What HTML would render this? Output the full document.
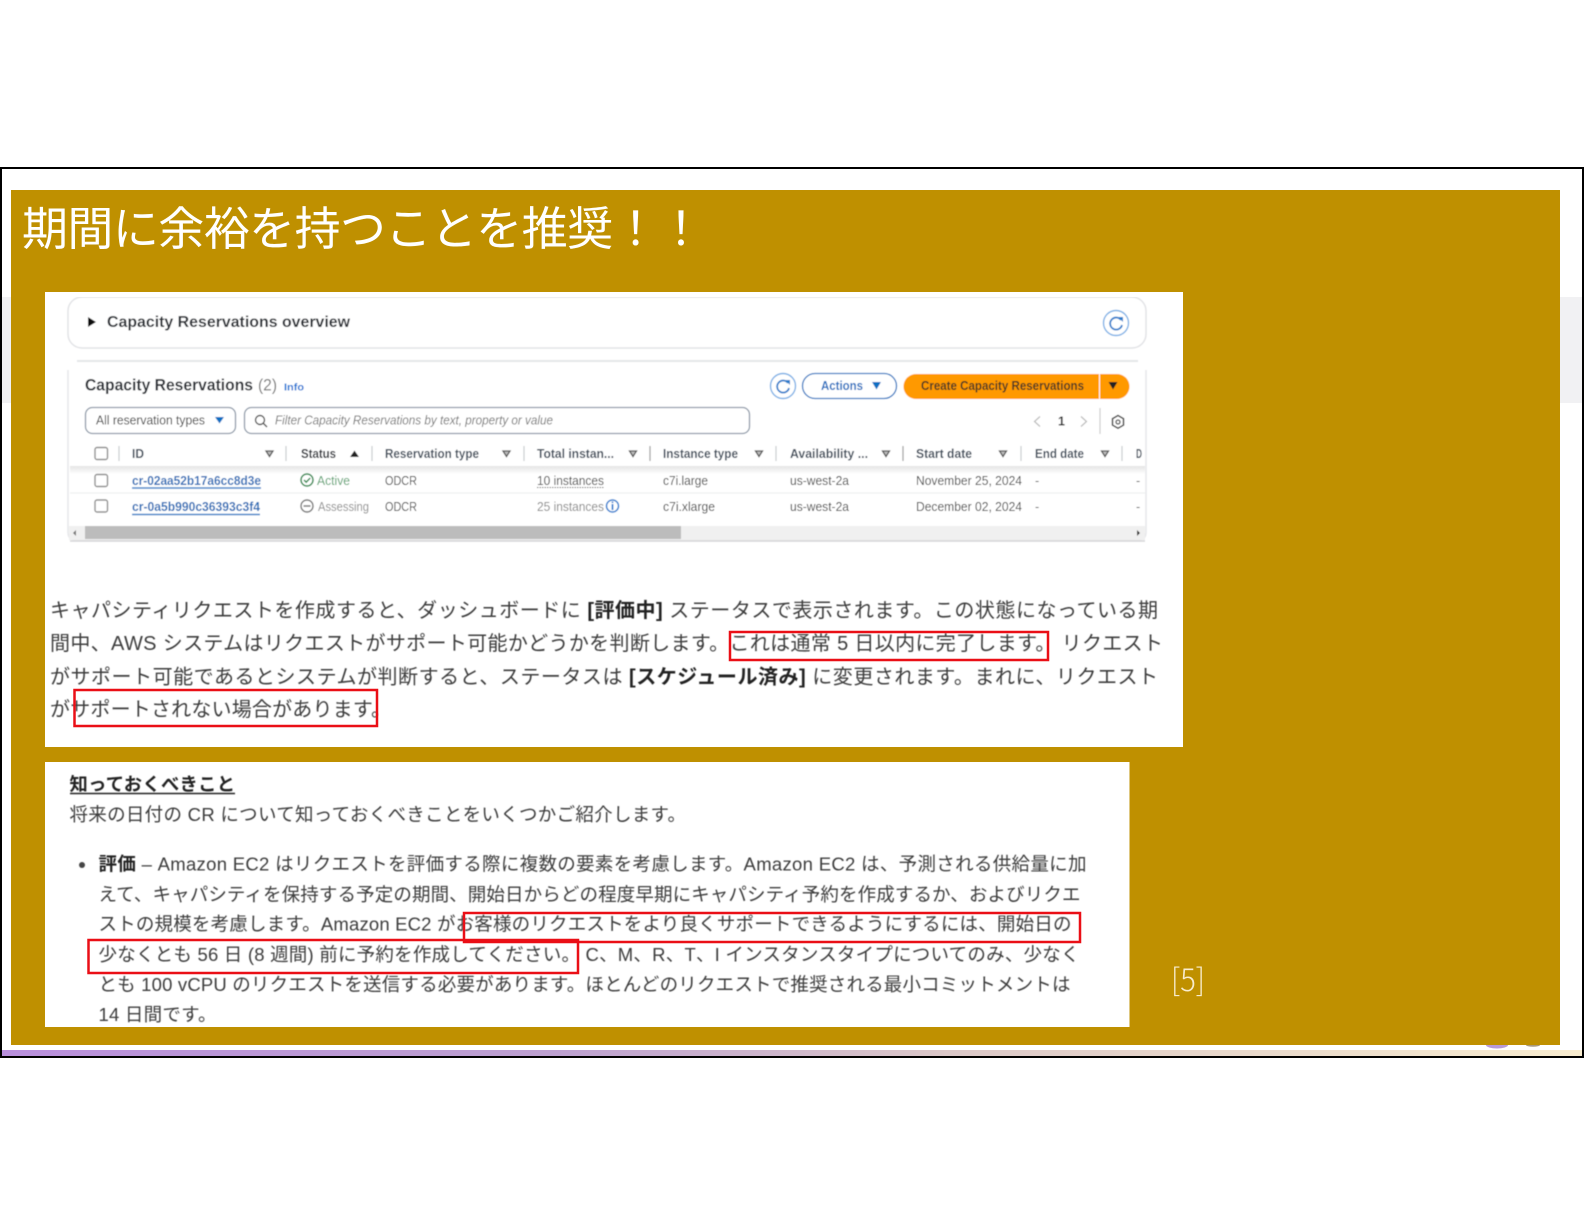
<!DOCTYPE html>
<html lang="ja"><head><meta charset="utf-8"><title>期間に余裕を持つことを推奨！！</title>
<style>
html,body{margin:0;padding:0;background:#fff}
svg{display:block}
.t{font-family:"Liberation Sans","Noto Sans CJK JP",sans-serif;fill:#3a3a3a;font-size:12.5px}
.h{font-weight:700;fill:#414d5c}
.c{fill:#444}
.j{font-family:"Liberation Sans","Noto Sans CJK JP",sans-serif;fill:#3c3c3c;font-size:20px}
.k{font-family:"Liberation Sans","Noto Sans CJK JP",sans-serif;fill:#3c3c3c;font-size:18.5px}
.b{font-weight:700;fill:#222}
.l{fill:#2a70b8;font-weight:700}
</style></head><body>
<svg xmlns="http://www.w3.org/2000/svg" width="1584" height="1224" viewBox="0 0 1584 1224">
<defs>
<filter id="bl" x="0" y="0" width="100%" height="100%"><feGaussianBlur stdDeviation="0.4"/></filter>
<linearGradient id="g" x1="0" x2="1" y1="0" y2="0"><stop offset="0" stop-color="#b98fdc"/><stop offset=".35" stop-color="#bda0d0"/><stop offset=".6" stop-color="#dcc8c8"/><stop offset="1" stop-color="#f8eccf"/></linearGradient>
<linearGradient id="sh" x1="0" x2="0" y1="0" y2="1"><stop offset="0" stop-color="#e4e4e4"/><stop offset="1" stop-color="#fff"/></linearGradient>
</defs>
<rect width="1584" height="1224" fill="#fff"/>
<rect x="2" y="297" width="9" height="106" fill="#f1f1f3"/>
<rect x="1559" y="297" width="23" height="106" fill="#f1f1f3"/>
<rect x="2" y="1050" width="1580" height="6" fill="url(#g)"/>
<ellipse cx="1497" cy="1045" rx="11" ry="3.500" fill="#b79ad8"/>
<ellipse cx="1533" cy="1045" rx="7" ry="1.800" fill="#a89a80"/>
<rect x="11" y="190" width="1549" height="855" fill="#bf9000"/>
<rect x="1" y="168" width="1582" height="889" fill="none" stroke="#000" stroke-width="2"/>

<text x="22" y="245" font-size="46" font-weight="400" fill="#fff" textLength="682" lengthAdjust="spacing" style="font-family:'Liberation Sans','Noto Sans CJK JP',sans-serif">期間に余裕を持つことを推奨！！</text>

<rect x="45" y="292" width="1138" height="455" fill="#fff"/>
<rect x="45" y="762" width="1084.500" height="265" fill="#fff"/>

<g filter="url(#bl)">
<!-- overview box -->
<rect x="68" y="297" width="1078" height="51" rx="14" fill="#fff" stroke="#e2e3e6" stroke-width="1.500"/>
<path d="M88 317l8 5-8 5z" fill="#111"/>
<text class="t" x="107" y="327" style="font-size:16px;font-weight:700;fill:#2a2f36" textLength="243" lengthAdjust="spacingAndGlyphs">Capacity Reservations overview</text>
<circle cx="1116" cy="323" r="12.500" fill="#fff" stroke="#7db1e6" stroke-width="1.400"/>
<path d="M1121 320a6 6 0 1 0 1 5" fill="none" stroke="#2f7fcc" stroke-width="1.800"/><path d="M1118 317l5 0 0 5z" fill="#2f7fcc"/>
<line x1="77" y1="361" x2="1138" y2="361" stroke="#e4e6e8" stroke-width="2"/>

<!-- table container -->
<path d="M68 370V532q0 8 8 8H1138q8 0 8-8V370" fill="#fff" stroke="#e6e7ea" stroke-width="1.500"/>
<text class="t" x="85" y="390.500" style="font-size:17px;font-weight:700;fill:#2a2f36" textLength="168" lengthAdjust="spacingAndGlyphs">Capacity Reservations</text>
<text class="t" x="258" y="390.500" style="font-size:17px;fill:#777" textLength="19" lengthAdjust="spacingAndGlyphs">(2)</text>
<text class="t" x="284" y="390.500" style="font-size:10px;font-weight:700;fill:#0972d3" textLength="20" lengthAdjust="spacingAndGlyphs">Info</text>

<circle cx="783" cy="386" r="12.500" fill="#fff" stroke="#7db1e6" stroke-width="1.400"/>
<path d="M788 383a6 6 0 1 0 1 5" fill="none" stroke="#2f7fcc" stroke-width="1.800"/><path d="M785 380l5 0 0 5z" fill="#2f7fcc"/>
<rect x="802.500" y="373.500" width="94" height="25" rx="12.500" fill="#fff" stroke="#2a78c2" stroke-width="1.300"/>
<text class="t" x="821" y="390" style="font-size:12.5px;font-weight:700;fill:#1a6fc0" textLength="42" lengthAdjust="spacingAndGlyphs">Actions</text>
<path d="M872 382h9l-4.500 7.500z" fill="#0a6fc2"/>
<path d="M916 374H1099V399H916a12.500 12.500 0 0 1 0-25z" fill="#ff9900"/>
<path d="M1100 374H1117a12.500 12.500 0 0 1 0 25H1100z" fill="#ff9900"/>
<text class="t" x="921" y="390" style="font-size:12.5px;font-weight:700;fill:#4a3a20" textLength="163" lengthAdjust="spacingAndGlyphs">Create Capacity Reservations</text>
<path d="M1108.500 382h9l-4.500 7.500z" fill="#222"/>

<rect x="85.500" y="407.500" width="150" height="26" rx="7" fill="#fff" stroke="#8d99a8" stroke-width="1.300"/>
<text class="t" x="96" y="424.500" textLength="109" lengthAdjust="spacingAndGlyphs">All reservation types</text>
<path d="M215 417h9l-4.500 6.500z" fill="#0a6fc2"/>
<rect x="244.500" y="407.500" width="505" height="26" rx="7" fill="#fff" stroke="#8d99a8" stroke-width="1.300"/>
<circle cx="260" cy="420" r="4.500" fill="none" stroke="#555" stroke-width="1.400"/><path d="M263 423l4 4" stroke="#555" stroke-width="1.500"/>
<text class="t" x="275" y="424.500" style="font-style:italic;fill:#777" textLength="278" lengthAdjust="spacingAndGlyphs">Filter Capacity Reservations by text, property or value</text>
<path d="M1040 416.500l-5.500 5 5.500 5" fill="none" stroke="#bbb" stroke-width="1.200"/>
<text class="t" x="1058" y="425.500" style="font-size:12.5px;font-weight:700;fill:#222">1</text>
<path d="M1081 416.500l5.500 5-5.500 5" fill="none" stroke="#bbb" stroke-width="1.200"/>
<line x1="1100" y1="408" x2="1100" y2="434" stroke="#ccc" stroke-width="1.200"/>
<path d="M1118 415.500l5.500 3.200v6.400l-5.500 3.200-5.500-3.200v-6.400z" fill="none" stroke="#444" stroke-width="1.500"/><circle cx="1118" cy="422" r="2" fill="none" stroke="#444" stroke-width="1.300"/>

<g transform="translate(0,-1)">
<!-- header -->
<rect x="95" y="448.500" width="12.500" height="12" rx="2" fill="#fff" stroke="#8d8d8d" stroke-width="1.400"/>
<g stroke="#c8cbcf" stroke-width="1.200">
<line x1="119" y1="447" x2="119" y2="462"/><line x1="286" y1="447" x2="286" y2="462"/><line x1="372" y1="447" x2="372" y2="462"/><line x1="524" y1="447" x2="524" y2="462"/><line x1="650" y1="447" x2="650" y2="462" stroke="#999"/><line x1="776" y1="447" x2="776" y2="462"/><line x1="903" y1="447" x2="903" y2="462" stroke="#999"/><line x1="1021" y1="447" x2="1021" y2="462"/><line x1="1122" y1="447" x2="1122" y2="462"/>
</g>
<text class="t h" x="132" y="459" textLength="12" lengthAdjust="spacingAndGlyphs">ID</text>
<text class="t h" x="301" y="459" style="fill:#2a2f36" textLength="35" lengthAdjust="spacingAndGlyphs">Status</text>
<text class="t h" x="385" y="459" textLength="94" lengthAdjust="spacingAndGlyphs">Reservation type</text>
<text class="t h" x="537" y="459" textLength="77" lengthAdjust="spacingAndGlyphs">Total instan...</text>
<text class="t h" x="663" y="459" textLength="75" lengthAdjust="spacingAndGlyphs">Instance type</text>
<text class="t h" x="790" y="459" textLength="78" lengthAdjust="spacingAndGlyphs">Availability ...</text>
<text class="t h" x="916" y="459" textLength="56" lengthAdjust="spacingAndGlyphs">Start date</text>
<text class="t h" x="1035" y="459" textLength="49" lengthAdjust="spacingAndGlyphs">End date</text>
<text class="t h" x="1136" y="459" textLength="6" lengthAdjust="spacingAndGlyphs">D</text>
<g fill="#bbb" stroke="#555" stroke-width="1.300"><path d="M266 452h7l-3.500 5.500z"/><path d="M503 452h7l-3.500 5.500z"/><path d="M629.500 452h7l-3.500 5.500z"/><path d="M755.500 452h7l-3.500 5.500z"/><path d="M882.500 452h7l-3.500 5.500z"/><path d="M999.500 452h7l-3.500 5.500z"/><path d="M1101.500 452h7l-3.500 5.500z"/></g>
<path d="M350 458h9l-4.500-6.500z" fill="#222"/>
<rect x="70" y="467" width="1075" height="8" fill="url(#sh)"/>
<line x1="70" y1="494" x2="1145" y2="494" stroke="#eaeded"/>

<!-- rows -->
<rect x="95" y="475.500" width="12.500" height="12" rx="2" fill="#fff" stroke="#8d8d8d" stroke-width="1.400"/>
<rect x="95" y="501" width="12.500" height="12" rx="2" fill="#fff" stroke="#8d8d8d" stroke-width="1.400"/>
<text class="t l" x="132" y="486" textLength="129" lengthAdjust="spacingAndGlyphs">cr-02aa52b17a6cc8d3e</text>
<line x1="132" y1="489" x2="261" y2="489" stroke="#3a80c8" stroke-width="1.500"/>
<text class="t l" x="132" y="512" textLength="128" lengthAdjust="spacingAndGlyphs">cr-0a5b990c36393c3f4</text>
<line x1="132" y1="515.500" x2="260" y2="515.500" stroke="#3a80c8" stroke-width="1.500"/>
<circle cx="307" cy="481" r="6" fill="none" stroke="#2e8b4f" stroke-width="1.500"/><path d="M304 481l2.200 2.200 4-4.200" fill="none" stroke="#2e8b4f" stroke-width="1.500"/>
<text class="t" x="317" y="486" style="fill:#54a06c" textLength="33" lengthAdjust="spacingAndGlyphs">Active</text>
<circle cx="307" cy="507" r="6" fill="none" stroke="#777" stroke-width="1.400"/><line x1="303.500" y1="507" x2="310.500" y2="507" stroke="#777" stroke-width="1.500"/>
<text class="t" x="318" y="512" style="fill:#8d8d8d" textLength="51" lengthAdjust="spacingAndGlyphs">Assessing</text>
<text class="t c" x="385" y="486" textLength="32" lengthAdjust="spacingAndGlyphs">ODCR</text>
<text class="t c" x="385" y="512" textLength="32" lengthAdjust="spacingAndGlyphs">ODCR</text>
<text class="t c" x="537" y="486" textLength="67" lengthAdjust="spacingAndGlyphs">10 instances</text>
<line x1="537" y1="488.500" x2="604" y2="488.500" stroke="#555" stroke-dasharray="1.500 1"/>
<text class="t" x="537" y="512" style="fill:#888" textLength="67" lengthAdjust="spacingAndGlyphs">25 instances</text>
<circle cx="612.500" cy="507" r="6" fill="#fff" stroke="#2f80d0" stroke-width="1.500"/><line x1="612.500" y1="505" x2="612.500" y2="511" stroke="#2f80d0" stroke-width="1.800"/><line x1="612.500" y1="502.500" x2="612.500" y2="504" stroke="#2f80d0" stroke-width="1.800"/>
<text class="t c" x="663" y="486" textLength="45" lengthAdjust="spacingAndGlyphs">c7i.large</text>
<text class="t c" x="663" y="512" textLength="52" lengthAdjust="spacingAndGlyphs">c7i.xlarge</text>
<text class="t c" x="790" y="486" textLength="59" lengthAdjust="spacingAndGlyphs">us-west-2a</text>
<text class="t c" x="790" y="512" textLength="59" lengthAdjust="spacingAndGlyphs">us-west-2a</text>
<text class="t c" x="916" y="486" textLength="106" lengthAdjust="spacingAndGlyphs">November 25, 2024</text>
<text class="t c" x="916" y="512" textLength="106" lengthAdjust="spacingAndGlyphs">December 02, 2024</text>
<text class="t c" x="1035" y="486">-</text><text class="t c" x="1035" y="512">-</text>
<text class="t c" x="1136" y="486">-</text><text class="t c" x="1136" y="512">-</text>
</g>

<!-- scrollbar -->
<rect x="69" y="526" width="1076" height="14" fill="#f0f0f0"/>
<rect x="85" y="526" width="596" height="13" fill="#bcbcbc"/>
<path d="M76 530l-3 3 3 3z" fill="#777"/><path d="M1137 530l3 3-3 3z" fill="#333"/>
<line x1="70" y1="541" x2="1145" y2="541" stroke="#d5d5d8" stroke-width="1.500"/>

<!-- paragraph 1 -->
<text class="j" x="50" y="617" textLength="1108" lengthAdjust="spacing">キャパシティリクエストを作成すると、ダッシュボードに <tspan class="b">[評価中]</tspan> ステータスで表示されます。この状態になっている期</text>
<text class="j" x="50" y="650" textLength="1113" lengthAdjust="spacing">間中、AWS システムはリクエストがサポート可能かどうかを判断します。これは通常 5 日以内に完了します。 リクエスト</text>
<text class="j" x="50" y="683.500" textLength="1108" lengthAdjust="spacing">がサポート可能であるとシステムが判断すると、ステータスは <tspan class="b">[スケジュール済み]</tspan> に変更されます。まれに、リクエスト</text>
<text class="j" x="50" y="716" textLength="341" lengthAdjust="spacing">がサポートされない場合があります。</text>

<!-- panel 2 -->
<text class="k b" x="69.500" y="790.500" style="font-size:18.300px;fill:#222" textLength="165.500" lengthAdjust="spacing">知っておくべきこと</text>
<line x1="70" y1="793.500" x2="235" y2="793.500" stroke="#222" stroke-width="1.500"/>
<text class="k" x="69.500" y="821" textLength="616.500" lengthAdjust="spacing">将来の日付の CR について知っておくべきことをいくつかご紹介します。</text>
<circle cx="82" cy="865" r="3" fill="#444"/>
<text class="k" x="98.500" y="870.500" textLength="988" lengthAdjust="spacing"><tspan class="b">評価</tspan> – Amazon EC2 はリクエストを評価する際に複数の要素を考慮します。Amazon EC2 は、予測される供給量に加</text>
<text class="k" x="98.500" y="901" textLength="982" lengthAdjust="spacing">えて、キャパシティを保持する予定の期間、開始日からどの程度早期にキャパシティ予約を作成するか、およびリクエ</text>
<text class="k" x="98.500" y="930.500" textLength="973" lengthAdjust="spacing">ストの規模を考慮します。Amazon EC2 がお客様のリクエストをより良くサポートできるようにするには、開始日の</text>
<text class="k" x="98.500" y="961" textLength="981" lengthAdjust="spacing">少なくとも 56 日 (8 週間) 前に予約を作成してください。 C、M、R、T、I インスタンスタイプについてのみ、少なく</text>
<text class="k" x="98.500" y="991" textLength="972" lengthAdjust="spacing">とも 100 vCPU のリクエストを送信する必要があります。ほとんどのリクエストで推奨される最小コミットメントは</text>
<text class="k" x="98.500" y="1021" textLength="118" lengthAdjust="spacing">14 日間です。</text>
</g>

<!-- red boxes -->
<g fill="none" stroke="#ea0f16" stroke-width="2.500">
<rect x="730" y="632" width="318" height="28"/>
<rect x="74.500" y="690" width="302.500" height="36"/>
<rect x="464" y="913" width="616" height="29"/>
<rect x="88.500" y="940" width="489.500" height="33"/>
</g>

<text x="1171" y="991" font-size="31" font-weight="300" fill="#f8eccf" textLength="34" lengthAdjust="spacingAndGlyphs" style="font-family:'Noto Sans CJK JP','Liberation Sans',sans-serif">[5]</text>
</svg>
</body></html>
